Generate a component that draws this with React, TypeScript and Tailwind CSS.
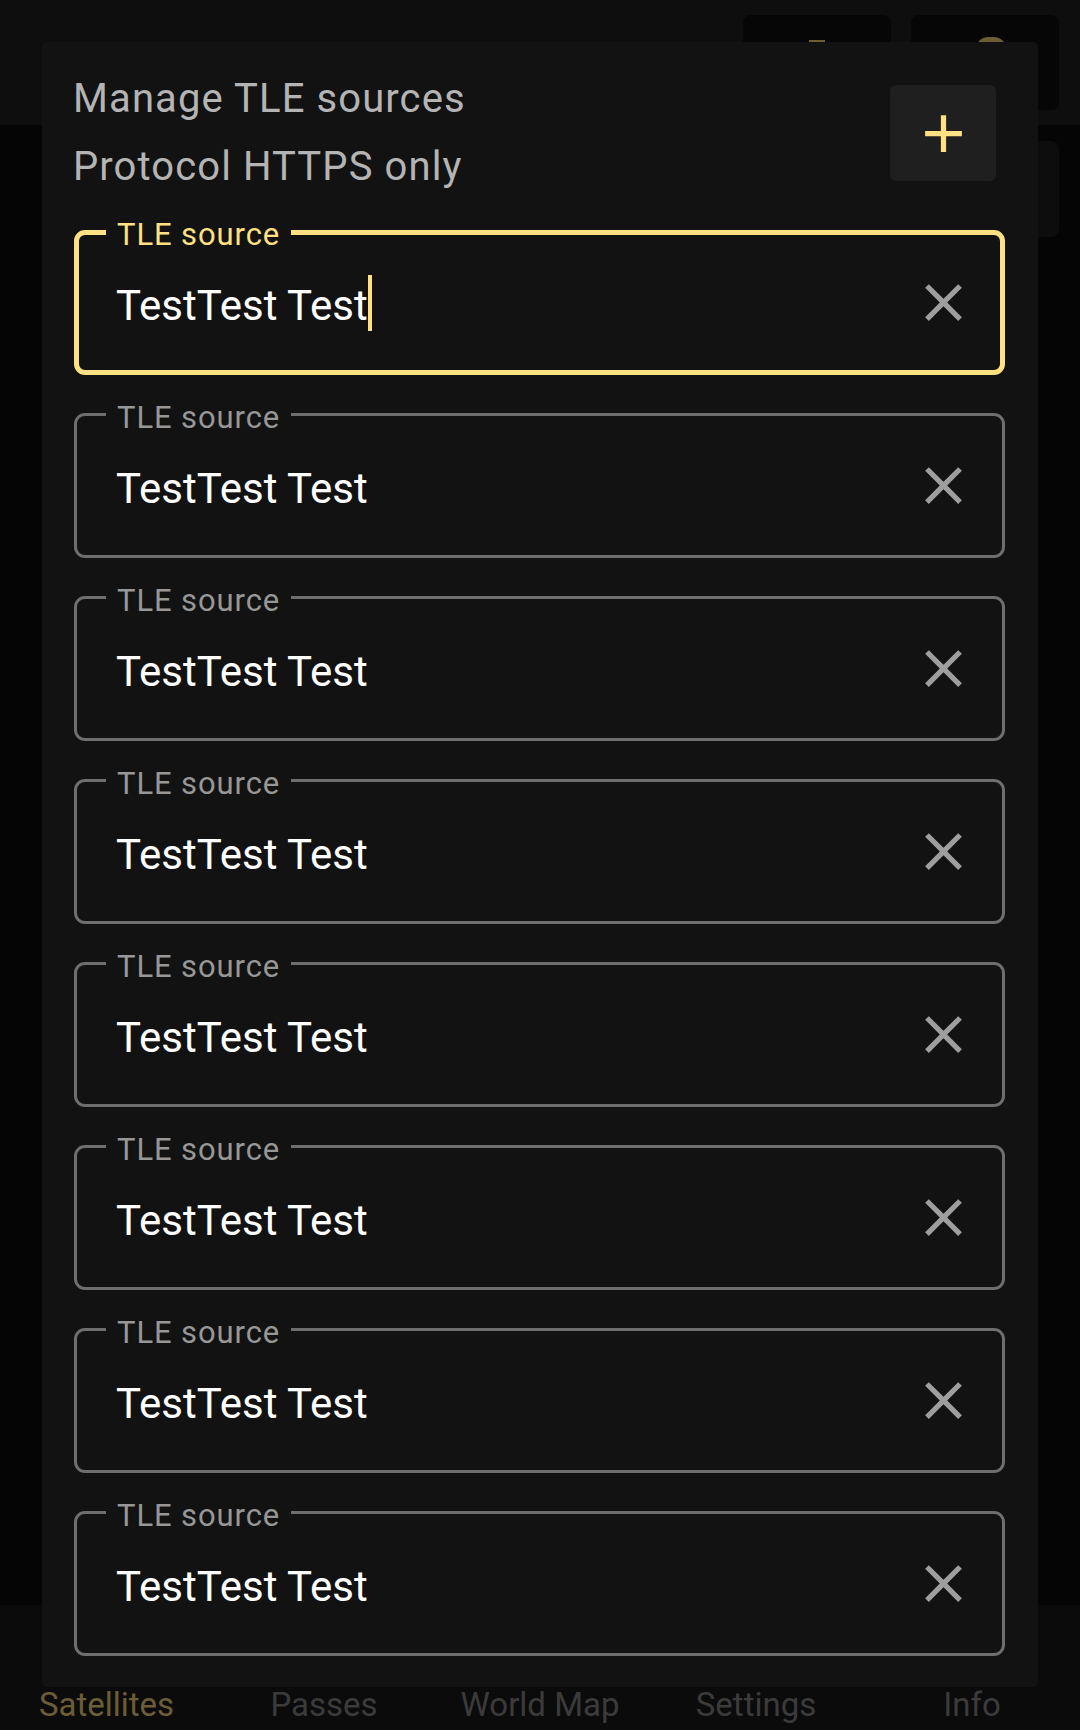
import clsx from "clsx"

const navItems = ["Satellites", "Passes", "World Map", "Settings", "Info"]

function CloseIcon() {
  return (
    <svg viewBox="0 0 24 24" className="h-[63px] w-[63px] shrink-0 fill-[#9e9e9e]">
      <path d="M19 6.41 17.59 5 12 10.59 6.41 5 5 6.41 10.59 12 5 17.59 6.41 19 12 13.41 17.59 19 19 17.59 13.41 12z" />
    </svg>
  )
}

function AddIcon() {
  return (
    <svg viewBox="0 0 24 24" className="h-[63px] w-[63px] fill-[#ffe082]">
      <path d="M19 13h-6v6h-2v-6H5v-2h6V5h2v6h6v2z" />
    </svg>
  )
}

function SourceField({ focused }: { focused?: boolean }) {
  return (
    <div
      className={clsx(
        "relative flex h-[145px] items-center rounded-[11px]",
        focused
          ? "border-[5px] border-[#ffe082] pl-[37px] pr-[25px]"
          : "border-[3px] border-[#6e6e6e] pl-[39px] pr-[27px]"
      )}
    >
      <span
        className={clsx(
          "absolute bg-[#121212] px-[11px] text-[31px] leading-none tracking-[0.9px]",
          focused ? "left-[27px] top-[-16px] text-[#ffe082]" : "left-[29px] top-[-14px] text-[#979797]"
        )}
      >
        TLE source
      </span>
      <div className="flex flex-1 items-center text-[42px] text-white">
        <span className="pt-[6px]">TestTest Test</span>
        {focused && <span className="inline-block h-[56px] w-[4px] bg-[#ffe082]" />}
      </div>
      <CloseIcon />
    </div>
  )
}

export default function App() {
  return (
    <div className="relative flex h-[1730px] w-[1080px] flex-col overflow-hidden bg-[#050505] font-['Roboto',sans-serif]">
      {/* app behind the dialog, dimmed */}
      <div className="flex h-[125px] shrink-0 justify-end gap-[20px] bg-[#0e0e0e] pr-[21px] pt-[15px]">
        <div className="flex h-[95px] w-[148px] justify-center rounded-[8px] bg-[#060606]">
          <div className="mt-[25px] h-[24px] w-[16px] bg-[#6b5f35]" />
        </div>
        <div className="flex h-[95px] w-[148px] justify-center rounded-[8px] bg-[#060606]">
          <div className="ml-[12px] mt-[22px] h-[30px] w-[30px] rounded-t-[12px] bg-[#6b5f35]" />
        </div>
      </div>
      <div className="flex-1 pl-[500px] pr-[21px] pt-[16px]">
        <div className="h-[96px] rounded-[8px] bg-[#0d0d0d]" />
      </div>
      <div className="flex h-[125px] shrink-0 flex-col justify-end bg-[#0b0b0b] pb-[9px]">
        <div className="grid grid-cols-5 text-[33px] leading-none">
          {navItems.map((item, i) => (
            <div key={item} className={clsx("text-center", i === 0 ? "-ml-[3px] text-[#6b5d36]" : "text-[#3b3b3b]")}>
              {item}
            </div>
          ))}
        </div>
      </div>

      {/* dialog */}
      <div className="absolute left-[42px] top-[42px] h-[1645px] w-[996px] overflow-hidden rounded-[5px] bg-[#121212] pl-[32px] pr-[33px] pt-[23px]">
        <div className="-ml-[1px] flex h-[136px] items-center justify-between pr-[9px]">
          <div className="text-[40px] leading-[68px] tracking-[1.1px] text-[#b4b4b4]">
            <div>Manage TLE sources</div>
            <div>Protocol HTTPS only</div>
          </div>
          <button className="flex h-[96px] w-[106px] items-center justify-center rounded-[6px] bg-[#1f1f1f]">
            <AddIcon />
          </button>
        </div>
        <div className="mt-[29px] flex flex-col gap-[38px]">
          <SourceField focused />
          <SourceField />
          <SourceField />
          <SourceField />
          <SourceField />
          <SourceField />
          <SourceField />
          <SourceField />
        </div>
      </div>
    </div>
  )
}
